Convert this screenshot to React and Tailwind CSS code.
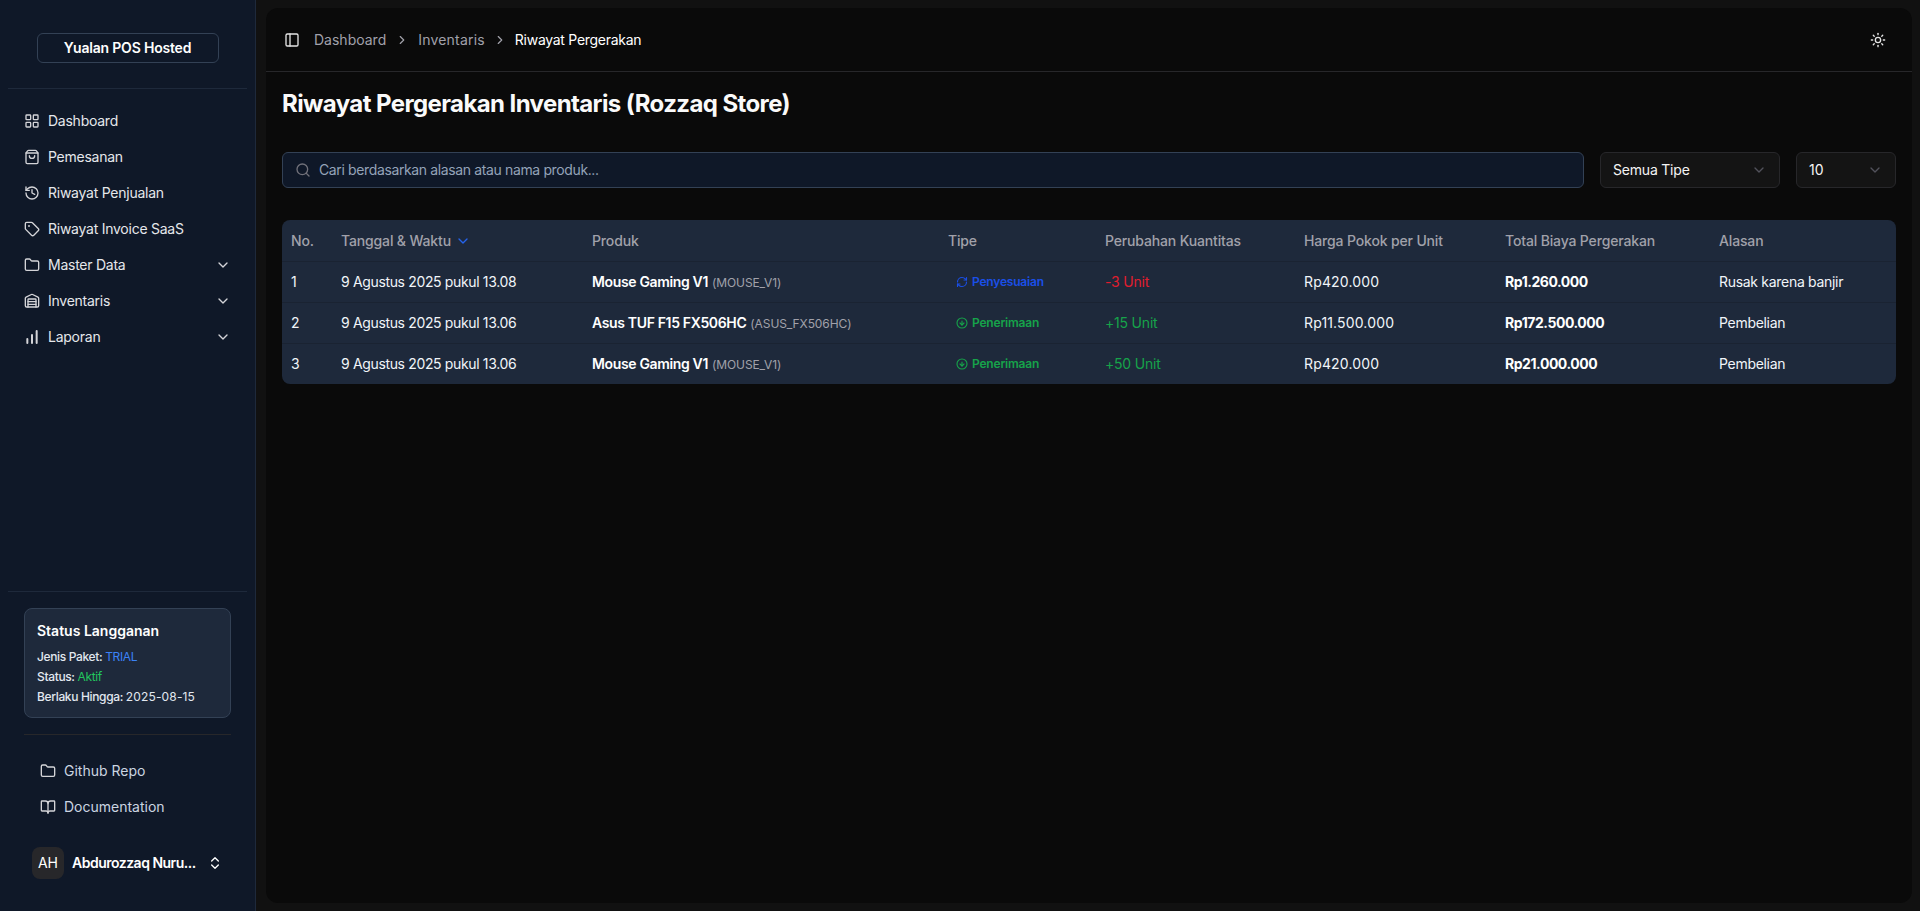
import { BookOpen, ChartNoAxesColumnIncreasing, ChevronDown, ChevronRight, ChevronsUpDown, CircleArrowDown, Folder, History, LayoutGrid, PanelLeft, RefreshCw, Search, ShoppingBag, Sun, Tag, Warehouse } from "lucide-react";

const menu = [
  { label: "Dashboard", icon: LayoutGrid },
  { label: "Pemesanan", icon: ShoppingBag },
  { label: "Riwayat Penjualan", icon: History },
  { label: "Riwayat Invoice SaaS", icon: Tag },
  { label: "Master Data", icon: Folder, more: true },
  { label: "Inventaris", icon: Warehouse, more: true },
  { label: "Laporan", icon: ChartNoAxesColumnIncreasing, more: true, stroke: 3 },
];

const rows = [
  { no: 1, date: "9 Agustus 2025 pukul 13.08", name: "Mouse Gaming V1", sku: "(MOUSE_V1)", type: "Penyesuaian", qty: "-3 Unit", price: "Rp420.000", total: "Rp1.260.000", reason: "Rusak karena banjir" },
  { no: 2, date: "9 Agustus 2025 pukul 13.06", name: "Asus TUF F15 FX506HC", sku: "(ASUS_FX506HC)", type: "Penerimaan", qty: "+15 Unit", price: "Rp11.500.000", total: "Rp172.500.000", reason: "Pembelian" },
  { no: 3, date: "9 Agustus 2025 pukul 13.06", name: "Mouse Gaming V1", sku: "(MOUSE_V1)", type: "Penerimaan", qty: "+50 Unit", price: "Rp420.000", total: "Rp21.000.000", reason: "Pembelian" },
];

function Sidebar() {
  return (
    <aside className="w-[256px] shrink-0 h-full bg-[#0f1828] border-r border-[#1e293b] flex flex-col">
      <div className="h-[89px] mx-2 border-b border-[#1e293b] flex justify-center pt-[33px]">
        <div className="w-[182px] h-[30px] rounded-md border border-[#334155] flex items-center justify-center text-sm font-semibold text-white tracking-[-0.2px]">
          Yualan POS Hosted
        </div>
      </div>
      <nav className="pt-[14px] px-4 flex flex-col">
        {menu.map((m) => (
          <div key={m.label} className="h-9 px-2 flex items-center gap-2 text-sm text-[#e5e7eb] tracking-[-0.25px]">
            <m.icon size={16} strokeWidth={m.stroke || 2} className="text-[#d4d4d8] shrink-0" />
            <span className="flex-1">{m.label}</span>
            {m.more && <ChevronDown size={16} className="text-[#d4d4d8]" />}
          </div>
        ))}
      </nav>
      <div className="mt-auto mx-2 border-t border-[#1e293b] pt-4 px-4">
        <div className="h-[110px] rounded-lg border border-[#334155] bg-[#1e293b] px-3 pt-[12px] text-xs text-[#e2e8f0] font-medium">
          <div className="text-sm font-semibold text-white mb-[6px]">Status Langganan</div>
          <div className="leading-5 tracking-[-0.35px]">Jenis Paket: <span className="text-[#3b82f6] font-normal">TRIAL</span></div>
          <div className="leading-5 tracking-[-0.35px]">Status: <span className="text-[#22c55e] font-normal">Aktif</span></div>
          <div className="leading-5 tracking-[-0.35px]">Berlaku Hingga: <span className="font-normal tracking-[0.15px]">2025-08-15</span></div>
        </div>
        <div className="mt-4 border-t border-[#27272a]" />
      </div>
      <div className="pt-[18px] px-6">
        {[{ label: "Github Repo", icon: Folder }, { label: "Documentation", icon: BookOpen }].map((l) => (
          <div key={l.label} className="h-9 px-4 flex items-center gap-2 text-sm text-[#cbd5e1]">
            <l.icon size={16} className="text-[#d4d4d8]" />
            {l.label}
          </div>
        ))}
      </div>
      <div className="pt-[22px] pb-8 pl-8 pr-8 flex items-center gap-2">
        <div className="size-8 rounded-lg bg-[#27272a] flex items-center justify-center text-sm text-white shrink-0">AH</div>
        <span className="flex-1 whitespace-nowrap text-sm font-semibold text-white tracking-[-0.5px]">Abdurozzaq Nuru...</span>
        <ChevronsUpDown size={16} className="text-white shrink-0" />
      </div>
    </aside>
  );
}

function Header() {
  return (
    <header className="h-[64px] shrink-0 border-b border-[#27272a] flex items-center px-[18px] text-sm">
      <PanelLeft size={16} className="text-[#e5e5e5]" />
      <span className="ml-[14px] text-[#a1a1aa]">Dashboard</span>
      <ChevronRight size={14} className="mx-[9px] text-[#a1a1aa]" />
      <span className="text-[#a1a1aa] tracking-[0.2px]">Inventaris</span>
      <ChevronRight size={14} className="mx-[8px] text-[#a1a1aa]" />
      <span className="text-white tracking-[-0.28px]">Riwayat Pergerakan</span>
      <Sun size={16} className="ml-auto mr-[8px] text-[#e5e5e5]" />
    </header>
  );
}

function TypeBadge({ type }) {
  const blue = type === "Penyesuaian";
  const Icon = blue ? RefreshCw : CircleArrowDown;
  return (
    <span className={"flex items-center gap-[4px] px-[8px] text-xs font-semibold tracking-[-0.2px] " + (blue ? "text-[#1a4fe8]" : "text-[#16a34a]")}>
      <Icon size={12} strokeWidth={2.25} />
      {type}
    </span>
  );
}

function MoveTable() {
  const th = "h-[41px] px-2 pt-[2px] text-left text-sm font-medium text-[#a1a1aa] tracking-[-0.15px]";
  const td = "h-[41px] px-2 pt-px text-sm text-[#f1f5f9]";
  return (
    <div className="mt-[32px] rounded-lg overflow-hidden bg-[#1e293b]">
      <table className="w-full table-fixed border-collapse">
        <colgroup>
          <col className="w-[51px]" />
          <col className="w-[251px]" />
          <col className="w-[356px]" />
          <col className="w-[157px]" />
          <col className="w-[199px]" />
          <col className="w-[201px]" />
          <col className="w-[214px]" />
          <col />
        </colgroup>
        <thead>
          <tr className="border-b border-[#1a2332]">
            <th className={th + " pl-[9px]"}>No.</th>
            <th className={th}>
              <span className="inline-flex items-center gap-[4px]">Tanggal &amp; Waktu <ChevronDown size={16} className="text-[#2563eb]" /></span>
            </th>
            <th className={th}>Produk</th>
            <th className={th}>Tipe</th>
            <th className={th}>Perubahan Kuantitas</th>
            <th className={th}>Harga Pokok per Unit</th>
            <th className={th}>Total Biaya Pergerakan</th>
            <th className={th}>Alasan</th>
          </tr>
        </thead>
        <tbody>
          {rows.map((r) => (
            <tr key={r.no} className="border-b border-[#1a2332] last:border-0">
              <td className={td + " pl-[9px]"}>{r.no}</td>
              <td className={td + " tracking-[-0.35px]"}>{r.date}</td>
              <td className={td}>
                <span className="font-semibold text-white tracking-[-0.35px]">{r.name}</span> <span className="text-xs text-[#a1a1aa] tracking-[-0.1px]">{r.sku}</span>
              </td>
              <td className={td}><TypeBadge type={r.type} /></td>
              <td className={td + " tracking-[-0.2px]" + (r.qty[0] === "-" ? " !text-[#e11d2e]" : " !text-[#16a34a]")}>{r.qty}</td>
              <td className={td + " tracking-[0.15px]"}>{r.price}</td>
              <td className={td + " font-bold text-white tracking-[-0.45px]"}>{r.total}</td>
              <td className={td + " tracking-[-0.3px]"}>{r.reason}</td>
            </tr>
          ))}
        </tbody>
      </table>
    </div>
  );
}

export default function App() {
  return (
    <div className="w-full h-[911px] flex overflow-hidden bg-[#111111] text-white font-['Inter',sans-serif]">
      <Sidebar />
      <main className="flex-1 my-2 ml-[10px] mr-2 rounded-xl bg-[#0a0a0a] flex flex-col">
        <Header />
        <div className="px-4 pt-[16px]">
          <h1 className="text-2xl font-bold leading-8 text-[#fafafa] tracking-[-0.6px]">Riwayat Pergerakan Inventaris (Rozzaq Store)</h1>
          <div className="mt-[32px] flex gap-4">
            <label className="flex-1 h-9 rounded-md border border-[#334155] bg-[#0f1828] flex items-center gap-2 px-3 text-sm text-[#94a3b8] tracking-[-0.37px]">
              <Search size={16} className="text-[#71717a]" />
              Cari berdasarkan alasan atau nama produk...
            </label>
            <div className="w-[180px] h-9 rounded-md border border-[#27272a] bg-[#141414] flex items-center justify-between px-3 text-sm text-[#f4f4f5] tracking-[-0.2px]">
              Semua Tipe <ChevronDown size={16} className="text-[#52525b]" />
            </div>
            <div className="w-[100px] h-9 rounded-md border border-[#27272a] bg-[#141414] flex items-center justify-between px-3 text-sm text-[#f4f4f5]">
              10 <ChevronDown size={16} className="text-[#52525b]" />
            </div>
          </div>
          <MoveTable />
        </div>
      </main>
    </div>
  );
}
